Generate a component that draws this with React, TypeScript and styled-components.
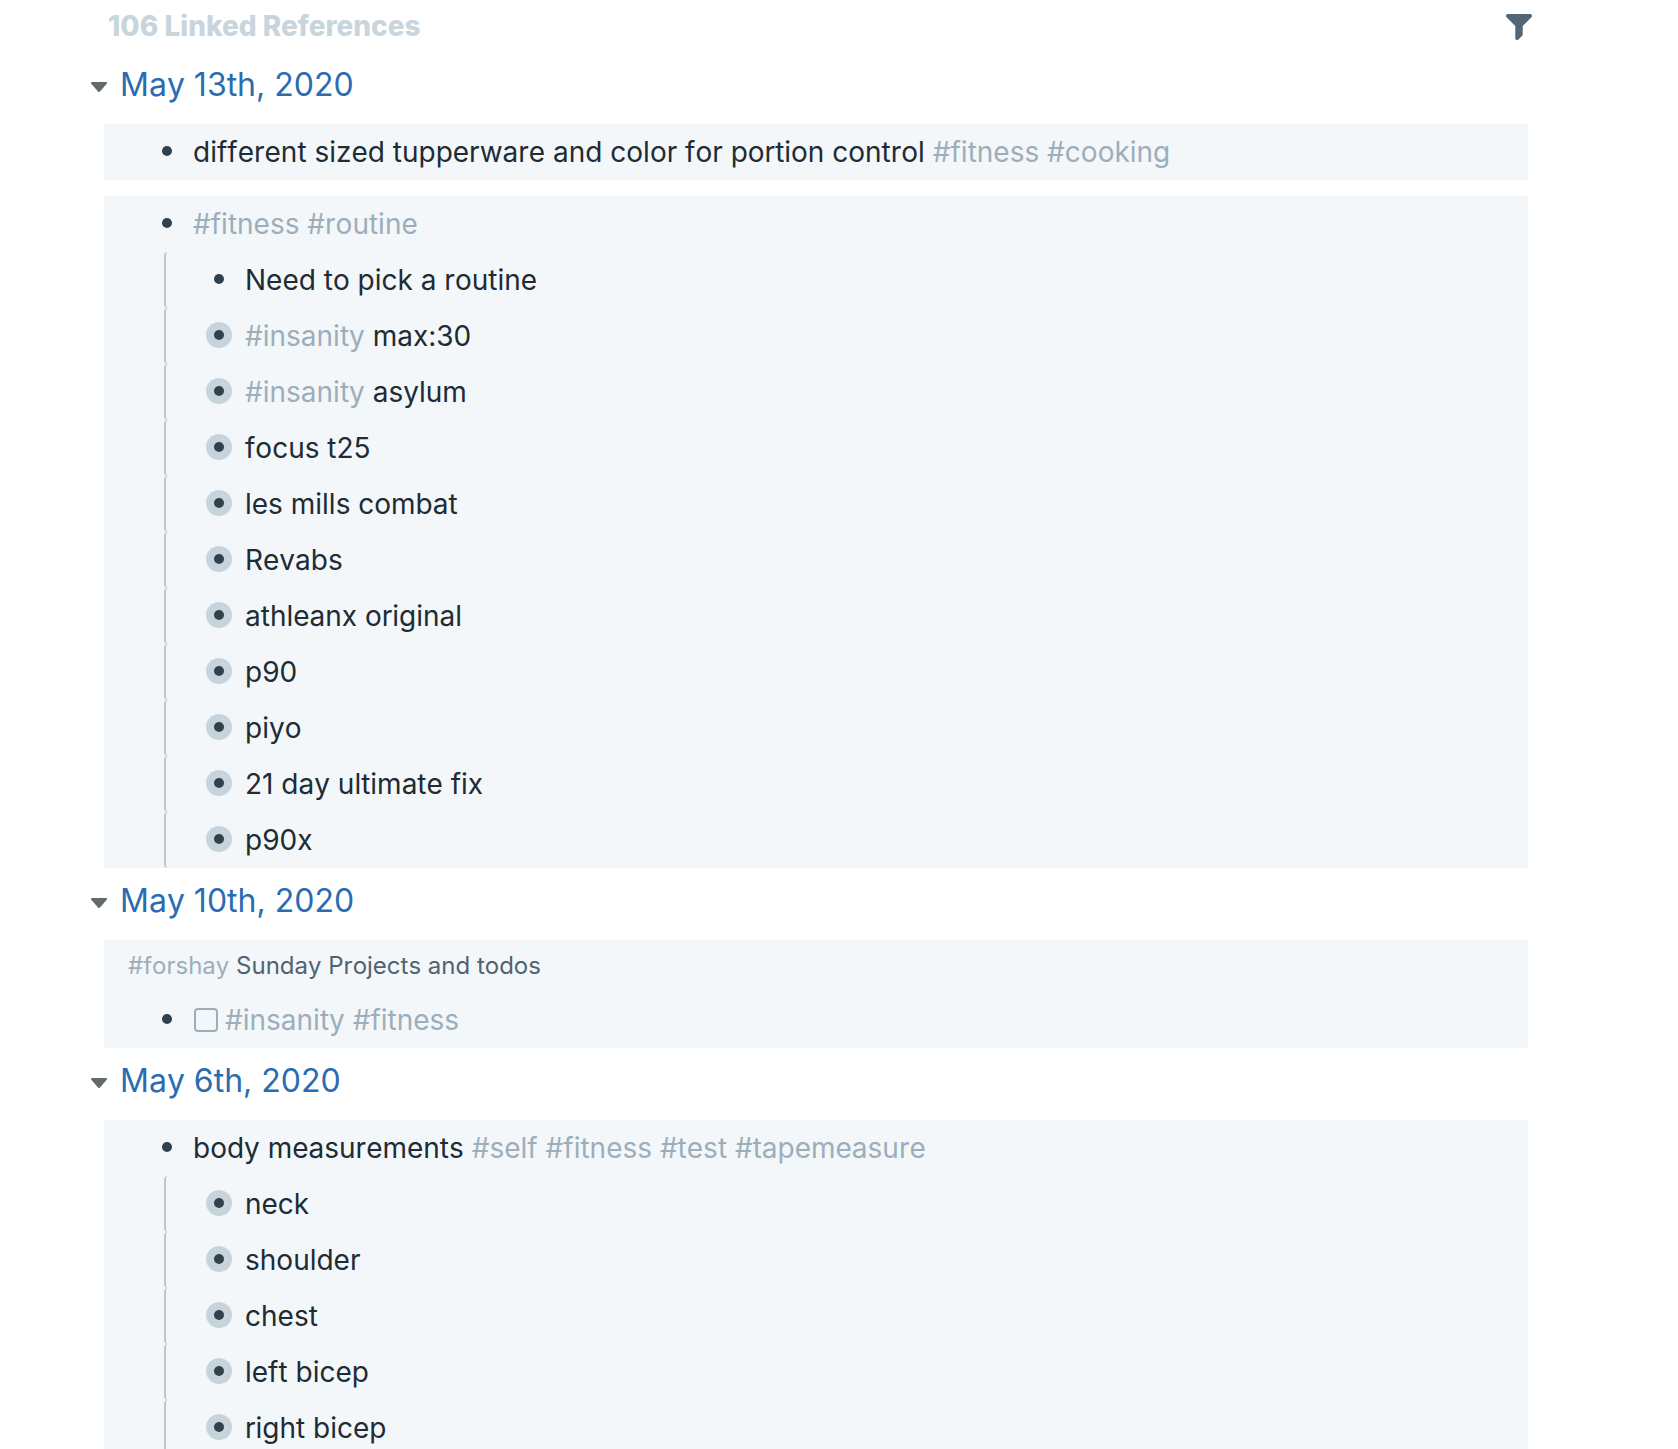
import { useState } from "react";
import type { ReactNode } from "react";
import styled, { createGlobalStyle } from "styled-components";

const GlobalStyle = createGlobalStyle`
  *, *::before, *::after { box-sizing: border-box; }
  body {
    margin: 0;
    background: #fff;
    color: #202b33;
    font-family: Inter, "Liberation Sans", sans-serif;
    font-size: 28px;
    font-kerning: none;
    line-height: 56px;
    overflow-x: hidden;
  }
`;

const Page = styled.main`
  height: 100vh;
  overflow: hidden;
  padding: 0 146px 0 88px;
`;

const Header = styled.header`
  display: flex;
  align-items: center;
  justify-content: space-between;
  padding-left: 20px;
`;

const Title = styled.h1`
  margin: 0;
  color: #c9d5dc;
  font-size: 28px;
  font-weight: 800;
  font-kerning: normal;
  line-height: 52px;
`;

const IconButton = styled.button`
  display: flex;
  align-items: center;
  justify-content: center;
  padding: 0;
  border: 0;
  background: none;
  cursor: pointer;

  svg {
    flex: none;
  }
`;

const FilterButton = styled(IconButton)`
  padding-top: 2px;
  color: #536676;
`;

const CaretButton = styled(IconButton)<{ $open: boolean }>`
  width: 22px;
  padding-top: 2px;
  color: #626a6e;

  svg {
    transform: rotate(${(p) => (p.$open ? 0 : -90)}deg);
  }
`;

const DayHeading = styled.div`
  display: flex;
  align-items: center;
  gap: 10px;
  padding: 1px 0 7px;
`;

const DayTitle = styled.h2`
  margin: 0;
  font-size: 32px;
  font-weight: 400;
  line-height: 64px;
`;

const DayLink = styled.a`
  color: #2b6cb0;
  text-decoration: none;
`;

const Cards = styled.div`
  display: flex;
  flex-direction: column;
  gap: 16px;
  margin: 0 4px 0 16px;
`;

const Card = styled.article`
  background: #f3f7fa;
`;

const Breadcrumb = styled.div`
  padding-left: 24px;
  color: #4f6373;
  font-size: 24px;
  line-height: 52px;
`;

const List = styled.ul`
  margin: 0;
  padding: 0 0 0 50px;
  list-style: none;
`;

const Children = styled.ul`
  margin: 0;
  padding: 0 0 0 10px;
  list-style: none;
`;

const ChildItem = styled.li`
  padding-left: 40px;
  border-left: 2px solid #b8c6d1;
  border-radius: 4px;
`;

const Row = styled.div`
  display: flex;
  align-items: center;
  gap: 13px;
`;

const Bullet = styled.button<{ $closed?: boolean }>`
  display: flex;
  flex: none;
  align-items: center;
  justify-content: center;
  width: 26px;
  height: 26px;
  margin-bottom: 2px;
  padding: 0;
  border: 0;
  border-radius: 50%;
  background: ${(p) => (p.$closed ? "#c8d4dc" : "transparent")};
  cursor: pointer;

  &::before {
    content: "";
    width: 10px;
    height: 10px;
    border-radius: 50%;
    background: #30404d;
  }
`;

const TagLink = styled.a`
  color: #9daebb;
  text-decoration: none;
`;

const Todo = styled.label`
  display: flex;
  align-items: center;
`;

const Checkbox = styled.input`
  appearance: none;
  flex: none;
  width: 24px;
  height: 24px;
  margin: 0 7px 0 1px;
  border: 2px solid #9daebb;
  border-radius: 4px;

  &:checked {
    background: #9daebb;
  }
`;

type Block = { text: string; closed?: boolean; todo?: boolean; children?: Block[] };
type Reference = { path?: string; block: Block };
type Day = { date: string; refs: Reference[] };

const closed = (text: string): Block => ({ text, closed: true });

const days: Day[] = [
  {
    date: "May 13th, 2020",
    refs: [
      { block: { text: "different sized tupperware and color for portion control #fitness #cooking" } },
      {
        block: {
          text: "#fitness #routine",
          children: [
            { text: "Need to pick a routine" },
            ...[
              "#insanity max:30",
              "#insanity asylum",
              "focus t25",
              "les mills combat",
              "Revabs",
              "athleanx original",
              "p90",
              "piyo",
              "21 day ultimate fix",
              "p90x",
            ].map(closed),
          ],
        },
      },
    ],
  },
  {
    date: "May 10th, 2020",
    refs: [
      { path: "#forshay Sunday Projects and todos", block: { text: "#insanity #fitness", todo: true } },
    ],
  },
  {
    date: "May 6th, 2020",
    refs: [
      {
        block: {
          text: "body measurements #self #fitness #test #tapemeasure",
          children: ["neck", "shoulder", "chest", "left bicep", "right bicep"].map(closed),
        },
      },
    ],
  },
];

function RichText({ text }: { text: string }) {
  const parts: ReactNode[] = text.split(/(#\w+)/).map((part, i) =>
    part.startsWith("#") ? (
      <TagLink key={i} href={part}>
        {part}
      </TagLink>
    ) : (
      part
    ),
  );
  return <span>{parts}</span>;
}

function BlockRow({ block }: { block: Block }) {
  return (
    <Row>
      <Bullet type="button" $closed={block.closed} aria-label={`Open ${block.text}`} />
      {block.todo ? (
        <Todo>
          <Checkbox type="checkbox" />
          <RichText text={block.text} />
        </Todo>
      ) : (
        <RichText text={block.text} />
      )}
    </Row>
  );
}

function DaySection({ day }: { day: Day }) {
  const [open, setOpen] = useState(true);
  return (
    <section>
      <DayHeading>
        <CaretButton
          type="button"
          $open={open}
          aria-expanded={open}
          aria-label={`Toggle ${day.date}`}
          onClick={() => setOpen(!open)}
        >
          <svg width="32" height="32" viewBox="0 0 16 16" fill="currentColor" aria-hidden="true">
            <path d="M12 6.5c0-.28-.22-.5-.5-.5h-7a.495.495 0 00-.37.83l3.5 4c.09.1.22.17.37.17s.28-.07.37-.17l3.5-4c.08-.09.13-.2.13-.33z" />
          </svg>
        </CaretButton>
        <DayTitle>
          <DayLink href="#day">{day.date}</DayLink>
        </DayTitle>
      </DayHeading>
      {open && (
        <Cards>
          {day.refs.map((ref) => (
            <Card key={ref.block.text}>
              {ref.path && (
                <Breadcrumb>
                  <RichText text={ref.path} />
                </Breadcrumb>
              )}
              <List>
                <li>
                  <BlockRow block={ref.block} />
                  {ref.block.children && (
                    <Children>
                      {ref.block.children.map((child) => (
                        <ChildItem key={child.text}>
                          <BlockRow block={child} />
                        </ChildItem>
                      ))}
                    </Children>
                  )}
                </li>
              </List>
            </Card>
          ))}
        </Cards>
      )}
    </section>
  );
}

export default function App() {
  return (
    <>
      <GlobalStyle />
      <Page>
        <Header>
          <Title>106 Linked References</Title>
          <FilterButton type="button" aria-label="Filter references">
            <svg width="26" height="26" viewBox="0.99 0.99 14 14" fill="currentColor" aria-hidden="true">
              <path d="M13.99.99h-12a1.003 1.003 0 00-.71 1.71l4.71 4.71V14a1.003 1.003 0 001.71.71l2-2c.18-.18.29-.43.29-.71V7.41L14.7 2.7a1.003 1.003 0 00-.71-1.71z" />
            </svg>
          </FilterButton>
        </Header>
        {days.map((day) => (
          <DaySection key={day.date} day={day} />
        ))}
      </Page>
    </>
  );
}
